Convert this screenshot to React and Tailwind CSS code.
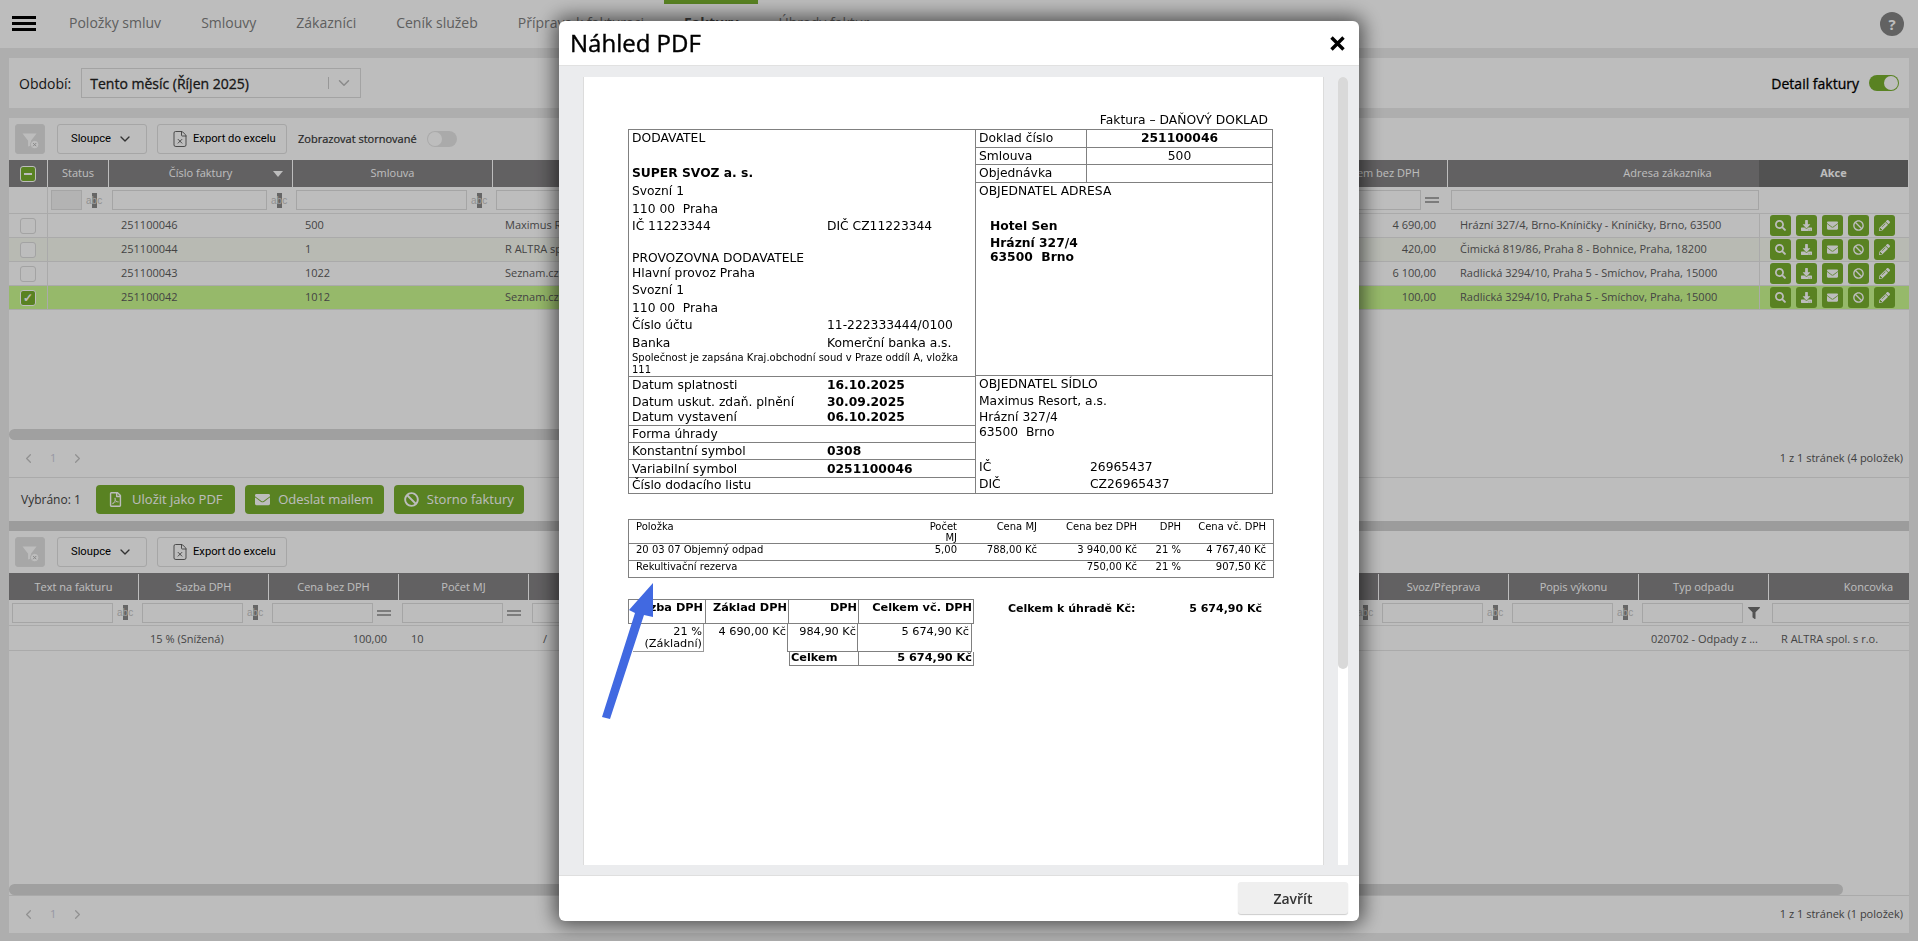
import { ChevronDown, ChevronLeft, ChevronRight, FileX } from 'lucide-react';
import { FaBan, FaDownload, FaEnvelope, FaFilter, FaPencilAlt, FaRegFilePdf, FaSearch } from 'react-icons/fa';

const TOP_COLS = 'grid grid-cols-[39px_61px_184px_200px_815px_140px_311px_150px]';
const BOTTOM_COLS = 'grid grid-cols-[130px_130px_130px_130px_720px_130px_130px_130px_130px_200px]';

const navItems = ['Položky smluv', 'Smlouvy', 'Zákazníci', 'Ceník služeb', 'Příprava k fakturaci', 'Faktury', 'Úhrady faktur'];

const invoices = [
  { id: '251100046', contract: '500', name: 'Maximus Resort, a.s.', total: '4 690,00', address: 'Hrázní 327/4, Brno-Kníničky - Kníničky, Brno, 63500', bg: 'bg-white' },
  { id: '251100044', contract: '1', name: 'R ALTRA spol. s r.o.', total: '420,00', address: 'Čimická 819/86, Praha 8 - Bohnice, Praha, 18200', bg: 'bg-[#f8fbf2]' },
  { id: '251100043', contract: '1022', name: 'Seznam.cz, a.s.', total: '6 100,00', address: 'Radlická 3294/10, Praha 5 - Smíchov, Praha, 15000', bg: 'bg-white' },
  { id: '251100042', contract: '1012', name: 'Seznam.cz, a.s.', total: '100,00', address: 'Radlická 3294/10, Praha 5 - Smíchov, Praha, 15000', bg: 'bg-[#cbfa8f]', selected: true },
];

function AbcIcon() {
  return (
    <span className="flex h-[14px] items-center font-['Liberation_Sans',sans-serif] text-[10px] text-[#c4c4c4]">
      a<span className="bg-[#8a8a8a] text-[#d8d8d8]">b</span>c
    </span>
  );
}

function EqualIcon() {
  return (
    <span className="flex w-[14px] flex-col gap-[2px]">
      <span className="h-[2px] bg-[#a8a8a8]"></span>
      <span className="h-[2px] bg-[#a8a8a8]"></span>
    </span>
  );
}

function FilterBox({ width, icon, disabled }) {
  return (
    <div className="flex h-full items-center gap-[4px] overflow-hidden pl-[3px]">
      <div className={`h-[20px] shrink-0 border border-[#dfdfdf] ${width} ${disabled ? 'bg-[#f2f2f2]' : 'bg-white'}`}></div>
      {icon === 'abc' && <AbcIcon />}
      {icon === 'eq' && <EqualIcon />}
      {icon === 'funnel' && <FaFilter className="ml-[1px] text-[12px] text-[#6f6f6f]" />}
    </div>
  );
}

function HeadCell({ children, dark }) {
  return (
    <div className={`flex h-full items-center justify-center border-r border-white ${dark ? 'bg-[#6f6f6f] font-bold' : ''}`}>
      {children}
    </div>
  );
}

function ClearFilterIcon() {
  return (
    <svg viewBox="0 0 30 30" className="h-[30px] w-[30px]">
      <path d="M7 9h15l-6 8v5l-3 1v-6z" fill="#fff" />
      <circle cx="20" cy="21" r="4.5" fill="#fff" stroke="#e0e0e0" />
      <path d="M18.3 19.3l3.4 3.4M21.7 19.3l-3.4 3.4" stroke="#b5b5b5" strokeWidth="1" />
    </svg>
  );
}

function Toolbar({ children }) {
  return (
    <div className="flex h-[42px] items-start gap-[10px] pl-[6px] pt-[6px] font-['Roboto',sans-serif] text-[11.2px] text-black">
      <div className="mr-[2px] flex h-[30px] w-[30px] items-center justify-center rounded-[3px] border border-[#e3e3e3] bg-[#e2e2e2]">
        <ClearFilterIcon />
      </div>
      <button className="flex h-[30px] w-[90px] items-center justify-between rounded-[3px] border border-[#e0e0e0] pl-[13px] pr-[13px]">
        Sloupce
        <ChevronDown size={16} strokeWidth={2} className="text-[#444]" />
      </button>
      <button className="flex h-[30px] w-[130px] items-center gap-[3px] rounded-[3px] border border-[#e0e0e0] pl-[13px]">
        <FileX size={18} strokeWidth={1.2} className="text-[#555]" />
        <span className="ml-[1px]">Export do excelu</span>
      </button>
      {children}
    </div>
  );
}

function Pager({ label }) {
  return (
    <div className="flex h-[37px] items-center justify-between pl-[12px] pr-[6px] text-[11px]">
      <div className="flex items-center gap-[14px] text-[#c4c4c4]">
        <ChevronLeft size={15} />
        <span className="text-[#ccd]">1</span>
        <ChevronRight size={15} />
      </div>
      <span className="text-[#555]">{label}</span>
    </div>
  );
}

function ActionIcons() {
  const icons = [FaSearch, FaDownload, FaEnvelope, FaBan, FaPencilAlt];
  return (
    <div className="flex h-full items-center gap-[5px] pl-[10px]">
      {icons.map((Icon, i) => (
        <span key={i} className="flex h-[21px] w-[21px] items-center justify-center rounded-[3px] bg-[#78b02f] text-[11px] text-white">
          <Icon />
        </span>
      ))}
    </div>
  );
}

function Checkbox({ state }) {
  if (state === 'empty') {
    return <span className="h-[16px] w-[16px] rounded-[3px] border border-[#dcdcdc] bg-white"></span>;
  }
  return (
    <span className="flex h-[16px] w-[16px] items-center justify-center rounded-[3px] border border-white bg-[#78b02f] text-[12px] font-bold leading-none text-white">
      {state === 'minus' ? <span className="h-[2px] w-[8px] bg-white"></span> : '✓'}
    </span>
  );
}

function InvoicesTable() {
  return (
    <div className="text-[11px]">
      <div className={`${TOP_COLS} h-[27px] bg-[#858385] text-white`}>
        <HeadCell><Checkbox state="minus" /></HeadCell>
        <HeadCell>Status</HeadCell>
        <div className="relative flex h-full items-center justify-center border-r border-white">
          Číslo faktury
          <span className="absolute right-[9px] top-[11px] h-0 w-0 border-x-[5px] border-t-[6px] border-x-transparent border-t-white"></span>
        </div>
        <HeadCell>Smlouva</HeadCell>
        <HeadCell></HeadCell>
        <HeadCell>Celkem bez DPH</HeadCell>
        <div className="flex h-full items-center justify-center pl-[128px]">Adresa zákazníka</div>
        <HeadCell dark>Akce</HeadCell>
      </div>
      <div className={`${TOP_COLS} h-[27px] border-b border-[#e6e6e6]`}>
        <div className="border-r border-[#e6e6e6]"></div>
        <FilterBox width="w-[31px]" icon="abc" disabled />
        <FilterBox width="w-[155px]" icon="abc" />
        <FilterBox width="w-[171px]" icon="abc" />
        <FilterBox width="w-[800px]" />
        <FilterBox width="w-[110px]" icon="eq" />
        <FilterBox width="w-[308px]" />
        <div></div>
      </div>
      {invoices.map((row) => (
        <div key={row.id} className={`${TOP_COLS} h-[24px] border-b border-[#e6e6e6] text-[#5c5c5c] ${row.bg}`}>
          <div className="flex items-center justify-center border-r border-[#e6e6e6]">
            <Checkbox state={row.selected ? 'check' : 'empty'} />
          </div>
          <div></div>
          <div className="flex items-center pl-[12px]">{row.id}</div>
          <div className="flex items-center pl-[12px]">{row.contract}</div>
          <div className="flex items-center pl-[12px]">{row.name}</div>
          <div className="flex items-center justify-end pr-[12px]">{row.total}</div>
          <div className="flex items-center pl-[12px]">{row.address}</div>
          <div className="border-l border-[#e6e6e6]"><ActionIcons /></div>
        </div>
      ))}
    </div>
  );
}

function DetailTable() {
  const heads = ['Text na fakturu', 'Sazba DPH', 'Cena bez DPH', 'Počet MJ', '', '', 'Svoz/Přeprava', 'Popis výkonu', 'Typ odpadu', 'Koncovka'];
  const filters = ['abc', 'abc', 'eq', 'eq', null, 'abc', 'abc', 'abc', 'funnel', null];
  return (
    <div className="overflow-hidden text-[11px]">
      <div className={`${BOTTOM_COLS} h-[27px] w-[1960px] bg-[#858385] pt-[1px] text-white`}>
        {heads.map((head, i) => <HeadCell key={i}>{head}</HeadCell>)}
      </div>
      <div className={`${BOTTOM_COLS} h-[26px] w-[1960px] border-b border-[#e6e6e6]`}>
        {filters.map((icon, i) => (
          <FilterBox key={i} width={i === 9 ? 'w-[195px]' : i === 4 ? 'w-[700px]' : 'w-[101px]'} icon={icon} />
        ))}
      </div>
      <div className={`${BOTTOM_COLS} h-[25px] w-[1960px] items-center border-b border-[#e6e6e6] pt-[2px] text-[#5c5c5c]`}>
        <div></div>
        <div className="pl-[11px]">15 % (Snížená)</div>
        <div className="pr-[12px] text-right">100,00</div>
        <div className="pl-[12px]">10</div>
        <div className="pl-[14px]">/</div>
        <div></div>
        <div></div>
        <div></div>
        <div className="pl-[12px]">020702 - Odpady z ...</div>
        <div className="pl-[12px]">R ALTRA spol. s r.o.</div>
      </div>
    </div>
  );
}

const supplierRows = [
  { h: 'h-[17px]', a: 'DODAVATEL' },
  { h: 'h-[18px]' },
  { h: 'h-[17px]', a: 'SUPER SVOZ a. s.', bold: true },
  { h: 'h-[18px]', a: 'Svozní 1' },
  { h: 'h-[18px]', a: '110 00  Praha' },
  { h: 'h-[17px]', a: 'IČ 11223344', b: 'DIČ CZ11223344' },
  { h: 'h-[15px]' },
  { h: 'h-[16px]', a: 'PROVOZOVNA DODAVATELE' },
  { h: 'h-[15px]', a: 'Hlavní provoz Praha' },
  { h: 'h-[18px]', a: 'Svozní 1' },
  { h: 'h-[18px]', a: '110 00  Praha' },
  { h: 'h-[17px]', a: 'Číslo účtu', b: '11-222333444/0100' },
  { h: 'h-[18px]', a: 'Banka', b: 'Komerční banka a.s.' },
];

const paymentRows = [
  { h: 'h-[17px]', a: 'Datum splatnosti', b: '16.10.2025' },
  { h: 'h-[17px]', a: 'Datum uskut. zdaň. plnění', b: '30.09.2025' },
  { h: 'h-[14px]', a: 'Datum vystavení', b: '06.10.2025' },
  { h: 'h-[18px]', a: 'Forma úhrady', line: true },
  { h: 'h-[17px]', a: 'Konstantní symbol', b: '0308', line: true },
  { h: 'h-[18px]', a: 'Variabilní symbol', b: '0251100046', line: true },
  { h: 'h-[16px]', a: 'Číslo dodacího listu', line: true },
];

const itemRows = [
  { name: 'Položka', count: <>Počet<br />MJ</>, unit: 'Cena MJ', base: 'Cena bez DPH', vat: 'DPH', total: 'Cena vč. DPH', h: 'h-[23px] pt-[1px]' },
  { name: '20 03 07 Objemný odpad', count: '5,00', unit: '788,00 Kč', base: '3 940,00 Kč', vat: '21 %', total: '4 767,40 Kč', h: 'h-[17px] border-t border-[#808080]' },
  { name: 'Rekultivační rezerva', count: '', unit: '', base: '750,00 Kč', vat: '21 %', total: '907,50 Kč', h: 'h-[17px] border-t border-[#808080]' },
];

function SupplierRow({ row }) {
  return (
    <div className={`flex items-center whitespace-pre pl-[3px] ${row.h} ${row.bold ? 'font-bold' : ''}`}>
      <span className="w-[195px]">{row.a}</span>
      <span>{row.b}</span>
    </div>
  );
}

function PaymentRow({ row }) {
  return (
    <div className={`flex items-center pl-[3px] ${row.h} ${row.line ? 'border-t border-[#808080]' : ''}`}>
      <span className="w-[195px]">{row.a}</span>
      <span className="font-bold">{row.b}</span>
    </div>
  );
}

function Invoice() {
  return (
    <div className="font-['DejaVu_Sans',sans-serif] text-[12.3px] leading-none text-black">
      <div className="flex h-[17px] w-[640px] items-center justify-end">Faktura – DAŇOVÝ DOKLAD</div>
      <div className="flex h-[365px] w-[645px] border border-[#808080]">
        <div className="flex w-[347px] flex-col border-r border-[#808080]">
          <div className="h-[247px] border-b border-[#808080]">
            {supplierRows.map((row, i) => <SupplierRow key={i} row={row} />)}
            <p className="pl-[3px] text-[10px] leading-[12px]">Společnost je zapsána Kraj.obchodní soud v Praze oddíl A, vložka 111</p>
          </div>
          {paymentRows.map((row) => <PaymentRow key={row.a} row={row} />)}
        </div>
        <div className="flex flex-1 flex-col">
          <div className="flex h-[18px] items-center border-b border-[#808080]">
            <span className="flex h-full w-[111px] items-center border-r border-[#808080] pl-[3px]">Doklad číslo</span>
            <span className="flex-1 text-center font-bold">251100046</span>
          </div>
          <div className="flex h-[17px] items-center border-b border-[#808080]">
            <span className="flex h-full w-[111px] items-center border-r border-[#808080] pl-[3px]">Smlouva</span>
            <span className="flex-1 text-center">500</span>
          </div>
          <div className="flex h-[18px] items-center border-b border-[#808080]">
            <span className="flex h-full w-[111px] items-center border-r border-[#808080] pl-[3px]">Objednávka</span>
          </div>
          <div className="h-[194px] border-b border-[#808080] pl-[3px] pt-[2px]">
            OBJEDNATEL ADRESA
            <div className="whitespace-pre pl-[11px] pt-[23px] font-bold">
              <p className="h-[17px]">Hotel Sen</p>
              <p className="h-[14px]">Hrázní 327/4</p>
              <p>63500  Brno</p>
            </div>
          </div>
          <div className="flex-1 pl-[3px]">
            <p className="flex h-[17px] items-center">OBJEDNATEL SÍDLO</p>
            <p className="flex h-[17px] items-center">Maximus Resort, a.s.</p>
            <p className="flex h-[14px] items-center">Hrázní 327/4</p>
            <p className="flex h-[16px] items-center whitespace-pre">63500  Brno</p>
            <p className="h-[19px]"></p>
            <p className="flex h-[17px] items-center"><span className="w-[111px]">IČ</span>26965437</p>
            <p className="flex h-[17px] items-center"><span className="w-[111px]">DIČ</span>CZ26965437</p>
          </div>
        </div>
      </div>

      <div className="mt-[25px] w-[646px] border border-[#808080] text-[10px]">
        {itemRows.map((row) => (
          <div key={row.name} className={`grid grid-cols-[272px_60px_80px_100px_44px_1fr] text-right leading-[11px] ${row.h}`}>
            <span className="pl-[7px] text-left">{row.name}</span>
            <span className="pr-[4px]">{row.count}</span>
            <span className="pr-[4px]">{row.unit}</span>
            <span className="pr-[4px]">{row.base}</span>
            <span className="pr-[4px]">{row.vat}</span>
            <span className="pr-[7px]">{row.total}</span>
          </div>
        ))}
      </div>

      <div className="mt-[21px] flex items-start text-[11.3px]">
        <div className="w-[346px] text-right">
          <div className="flex h-[25px] font-bold">
            <span className="w-[78px] border border-[#808080] pr-[2px] pt-[2px]">Sazba DPH</span>
            <span className="w-[83px] border-y border-r border-[#808080] pr-[1px] pt-[2px]">Základ DPH</span>
            <span className="w-[70px] border-y border-r border-[#808080] pr-[1px] pt-[2px]">DPH</span>
            <span className="flex-1 border-y border-r border-[#808080] pr-[1px] pt-[2px]">Celkem vč. DPH</span>
          </div>
          <div className="flex h-[28px]">
            <span className="ml-[5px] w-[71px] border-b border-r border-[#999] pr-[1px] pt-[2px] leading-[12px]">21 %<br />(Základní)</span>
            <span className="w-[83px] pr-[1px] pt-[2px]">4 690,00 Kč</span>
            <span className="w-[71px] border-x border-b border-[#808080] pr-[1px] pt-[2px]">984,90 Kč</span>
            <span className="w-[114px] border-b border-r border-[#808080] pr-[2px] pt-[2px]">5 674,90 Kč</span>
          </div>
          <div className="flex h-[14px] pl-[161px] font-bold">
            <span className="flex w-[70px] items-center border-x border-b border-[#808080] pb-[1px] pl-[1px]">Celkem</span>
            <span className="flex flex-1 items-center justify-end border-b border-r border-[#808080] pb-[1px] pr-[1px]">5 674,90 Kč</span>
          </div>
        </div>
        <div className="ml-[34px] flex h-[17px] w-[254px] items-center justify-between pt-[1px] text-[11px] font-bold">
          <span>Celkem k úhradě Kč:</span>
          <span>5 674,90 Kč</span>
        </div>
      </div>
    </div>
  );
}

function PdfModal() {
  return (
    <div className="fixed inset-0 flex justify-center bg-black/[0.26] pt-[21px] font-['Open_Sans',sans-serif]">
      <div className="flex h-[900px] w-[800px] flex-col overflow-hidden rounded-[6px] bg-white shadow-[0_0_20px_4px_rgba(0,0,0,0.6)]">
        <div className="flex h-[45px] shrink-0 items-center justify-between border-b border-[#e1e1e1] pl-[11px] pr-[14px]">
          <h2 className="text-[24px] font-medium leading-none text-black [-webkit-text-stroke:0.4px_black]">Náhled PDF</h2>
          <svg viewBox="0 0 15 15" className="h-[15px] w-[15px]">
            <path d="M1.5 1.5l12 12M13.5 1.5l-12 12" stroke="#000" strokeWidth="3.4" />
          </svg>
        </div>
        <div className="flex min-h-0 flex-1 bg-[#ebecee] pb-[10px] pl-[24px] pr-[11px] pt-[11px]">
          <div className="relative w-[741px] border-x border-[#dcdcdc] bg-white pl-[44px] pt-[35px]">
            <Invoice />
          </div>
          <div className="ml-[14px] w-[10px] rounded-t-[5px] bg-white">
            <div className="h-[592px] rounded-[5px] bg-[#d9d9d9]"></div>
          </div>
        </div>
        <div className="flex h-[46px] shrink-0 items-start justify-end border-t border-[#dfdfdf] pr-[11px] pt-[6px]">
          <button className="h-[32px] w-[110px] rounded-[3px] bg-[#efefef] text-[14px] font-semibold text-[#333] shadow-[0_1px_1px_rgba(0,0,0,0.2)]">Zavřít</button>
        </div>
      </div>
    </div>
  );
}

export default function App() {
  return (
    <div className="relative flex h-screen flex-col overflow-hidden bg-[#ebebeb] font-['Open_Sans',sans-serif]">
      <header className="flex h-[48px] shrink-0 items-start bg-white">
        <div className="ml-[12px] mt-[16px] flex h-[15px] w-[24px] flex-col justify-between">
          <span className="h-[3px] bg-black"></span>
          <span className="h-[3px] bg-black"></span>
          <span className="h-[3px] bg-black"></span>
        </div>
        <nav className="ml-[13px] flex h-full text-[14px] text-[#808080]">
          {navItems.map((item) => (
            <a key={item} className={`flex h-full items-center border-t-4 px-[20px] pb-[8px] ${item === 'Faktury' ? 'border-[#78b02f] font-bold text-[#555]' : 'border-transparent'}`}>
              {item}
            </a>
          ))}
        </nav>
        <span className="ml-auto mr-[14px] mt-[12px] flex h-[24px] w-[24px] items-center justify-center rounded-full bg-[#858585] text-[15px] font-bold text-white">?</span>
      </header>

      <section className="mx-[9px] mt-[10px] flex h-[50px] shrink-0 items-center justify-between bg-white pl-[10px] pr-[10px] text-[14px]">
        <div className="flex items-center gap-[10px]">
          <span className="text-[#222]">Období:</span>
          <div className="flex h-[30px] w-[280px] items-center border border-[#dcdcdc] pl-[8px] font-medium text-[#222] [-webkit-text-stroke:0.3px_#222]">
            Tento měsíc (Říjen 2025)
            <span className="ml-auto h-[12px] border-l border-[#ccc]"></span>
            <ChevronDown size={18} className="ml-[6px] mr-[7px] text-[#bbb]" />
          </div>
        </div>
        <div className="flex items-center gap-[10px] font-medium text-black [-webkit-text-stroke:0.3px_black]">
          Detail faktury
          <span className="flex h-[16px] w-[30px] items-center justify-end rounded-full bg-[#78b02f] pr-[1px]">
            <span className="h-[14px] w-[14px] rounded-full bg-white"></span>
          </span>
        </div>
      </section>

      <section className="mx-[9px] mt-[10px] flex h-[403px] shrink-0 flex-col bg-white">
        <Toolbar>
          <div className="ml-[1px] flex h-[30px] items-center gap-[10px] font-['Open_Sans',sans-serif] text-[11px] font-medium text-[#333] [-webkit-text-stroke:0.2px_#333]">
            Zobrazovat stornované
            <span className="flex h-[16px] w-[30px] items-center rounded-full bg-[#e6e6e6] pl-[1px]">
              <span className="h-[14px] w-[14px] rounded-full bg-white"></span>
            </span>
          </div>
        </Toolbar>
        <InvoicesTable />
        <div className="mt-auto h-[11px] w-[800px] rounded-full bg-[#d8d8d8]"></div>
        <div className="border-b border-[#e6e6e6]"><Pager label="1 z 1 stránek (4 položek)" /></div>
        <div className="flex h-[43px] items-center pl-[12px] text-[12px] text-[#444]">
          <span className="mr-[15px]">Vybráno: 1</span>
          <div className="flex gap-[10px] text-[13px] text-white">
            <button className="flex h-[29px] w-[139px] items-center justify-center gap-[9px] rounded-[4px] bg-[#78b02f]"><FaRegFilePdf size={15} />Uložit jako PDF</button>
            <button className="flex h-[29px] w-[139px] items-center justify-center gap-[8px] rounded-[4px] bg-[#78b02f]"><FaEnvelope size={15} />Odeslat mailem</button>
            <button className="flex h-[29px] w-[130px] items-center justify-center gap-[8px] rounded-[4px] bg-[#78b02f]"><FaBan size={15} />Storno faktury</button>
          </div>
        </div>
      </section>

      <div className="mx-[9px] h-[10px] shrink-0 bg-[#d3d3d3]"></div>

      <section className="mx-[9px] flex h-[402px] shrink-0 flex-col bg-white">
        <Toolbar />
        <DetailTable />
        <div className="mt-auto h-[11px] w-[1834px] rounded-full bg-[#d8d8d8]"></div>
        <div className="border-t border-[#e6e6e6]"><Pager label="1 z 1 stránek (1 položek)" /></div>
      </section>

      <PdfModal />
      <svg className="pointer-events-none fixed left-[600px] top-[580px] h-[142px] w-[56px]" viewBox="600 580 56 142">
        <polygon points="602,717 610,719 644,615 653,617 653,583 629,610 635,613" fill="#4169e1" />
      </svg>
    </div>
  );
}
